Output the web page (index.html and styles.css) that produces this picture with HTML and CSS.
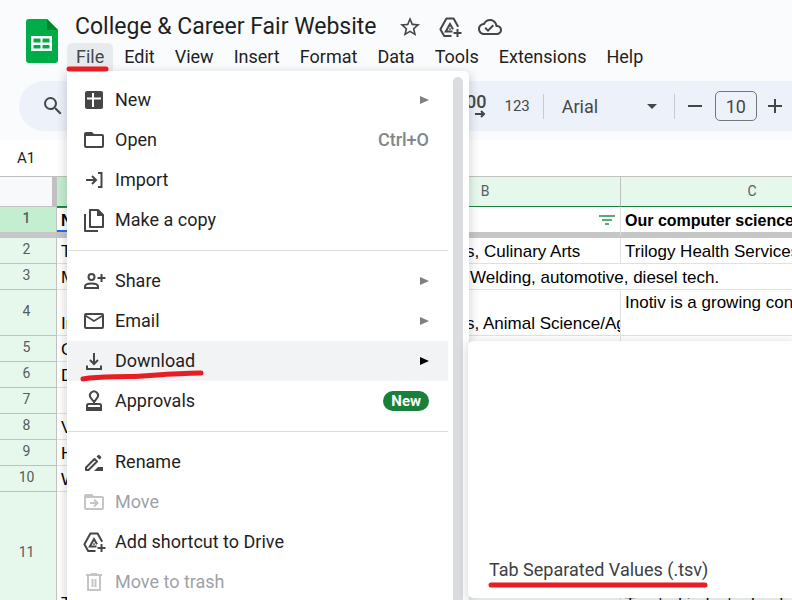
FILE: index.html
```html
<!DOCTYPE html>
<html lang="en">
<head>
<meta charset="utf-8">
<title>College &amp; Career Fair Website</title>
<link rel="stylesheet" href="styles.css">
</head>
<body>
<svg class="defs" aria-hidden="true">
  <symbol id="drive-add" viewBox="0 0 24 24">
    <path d="M13.500 21H6.200L2.400 14.200 8.400 3.400h7.200l4.600 8.300" fill="none" stroke="currentColor" stroke-width="2" stroke-linejoin="round"/>
    <path d="M14.500 16.500H7.800L12 9l3 5.200" fill="none" stroke="currentColor" stroke-width="2"/>
    <path d="M12 12.600l1.200 2.200h-2.400z" fill="currentColor"/>
    <path d="M19.500 14v8M15.500 18h8" fill="none" stroke="currentColor" stroke-width="2"/>
  </symbol>
</svg>
<header class="header">
  <svg class="logo" viewBox="0 0 32 44" role="img" aria-label="Sheets">
    <path d="M3 0h18l11 11v30a3 3 0 0 1-3 3H3a3 3 0 0 1-3-3V3a3 3 0 0 1 3-3z" fill="#00ac47"/>
    <path d="M21 0l11 11H21z" fill="#00832d"/>
    <path d="M5 17h21v15H5zM7.500 19.500v4h7v-4zM16.500 19.500v4h7v-4zM7.500 26v3.500h7V26zM16.500 26v3.500h7V26z" fill="#fff" fill-rule="evenodd"/>
  </svg>
  <div class="heading">
    <div class="title-row">
      <h1 class="title">College &amp; Career Fair Website</h1>
      <button class="icon-button" aria-label="Star"><svg viewBox="0 0 24 24"><path d="M22 9.240l-7.190-.62L12 2 9.190 8.630 2 9.240l5.460 4.730L5.820 21 12 17.270 18.180 21l-1.630-7.030L22 9.240zM12 15.400l-3.760 2.270 1-4.280-3.320-2.880 4.380-.38L12 6.100l1.710 4.040 4.380.38-3.320 2.880 1 4.280L12 15.400z"/></svg></button>
      <button class="icon-button" aria-label="Add shortcut to Drive"><svg><use href="#drive-add"/></svg></button>
      <button class="icon-button" aria-label="Saved to Drive"><svg viewBox="0 0 24 24"><path d="M19.350 10.040C18.670 6.590 15.640 4 12 4 9.110 4 6.600 5.640 5.350 8.040 2.340 8.360 0 10.910 0 14c0 3.310 2.690 6 6 6h13c2.760 0 5-2.240 5-5 0-2.640-2.050-4.780-4.650-4.960zM19 18H6c-2.210 0-4-1.790-4-4 0-2.050 1.530-3.760 3.560-3.970l1.070-.11.5-.95C8.080 7.140 9.940 6 12 6c2.620 0 4.880 1.860 5.390 4.430l.3 1.500 1.530.11c1.560.1 2.780 1.410 2.780 2.960 0 1.650-1.350 3-3 3zm-9-3.820l-2.090-2.090L6.500 13.500 10 17l6.010-6.010-1.410-1.410z"/></svg></button>
    </div>
    <nav class="menubar">
      <button class="open">File</button><button>Edit</button><button>View</button><button>Insert</button><button>Format</button><button>Data</button><button>Tools</button><button>Extensions</button><button>Help</button>
    </nav>
  </div>
</header>
<div class="toolbar">
  <button class="tool search" aria-label="Search the menus"><svg viewBox="0 0 24 24"><path d="M15.500 14h-.79l-.28-.27A6.470 6.470 0 0 0 16 9.500 6.500 6.500 0 1 0 9.500 16c1.610 0 3.090-.59 4.230-1.570l.27.28v.79l5 4.990L20.490 19l-4.990-5zm-6 0C7.010 14 5 11.990 5 9.500S7.010 5 9.500 5 14 7.010 14 9.500 11.990 14 9.500 14z"/></svg></button>
  <button class="tool decimals" aria-label="Increase decimal places">.00<svg viewBox="0 0 12 8"><path d="M1 4h9M7 1l3 3-3 3" fill="none" stroke="currentColor" stroke-width="2"/></svg></button>
  <button class="tool formats">123</button>
  <span class="divider"></span>
  <button class="tool font">Arial<svg viewBox="0 0 10 5"><path d="M0 0h10L5 5z"/></svg></button>
  <span class="divider"></span>
  <button class="tool step" aria-label="Decrease font size"><svg viewBox="0 0 14 14"><path d="M0 6h14v2H0z"/></svg></button>
  <input class="size" aria-label="Font size" value="10">
  <button class="tool step" aria-label="Increase font size"><svg viewBox="0 0 14 14"><path d="M0 6h6V0h2v6h6v2H8v6H6V8H0z"/></svg></button>
</div>
<div class="namebox"><input aria-label="Name box" value="A1"></div>
<main class="sheet">
  <table>
    <colgroup><col class="c-head"><col class="c-a"><col class="c-b"><col class="c-c"></colgroup>
    <thead><tr><th class="corner"></th><th class="active">A</th><th>B</th><th>C</th></tr></thead>
    <tbody>
      <tr class="frozen"><th>1</th><td class="selected">Name</td><td class="filter"><svg viewBox="0 0 16 10" role="img" aria-label="Filter"><path d="M0 0h16v2H0zM3 4h10v2H3zM6 8h4v2H6z"/></svg></td><td>Our computer science</td></tr>
      <tr class="after"><th>2</th><td>Trilogy</td><td class="tail">s, Culinary Arts</td><td>Trilogy Health Services</td></tr>
      <tr><th>3</th><td>M</td><td class="tail spill" colspan="2">Welding, automotive, diesel tech.</td></tr>
      <tr class="tall"><th>4</th><td>Inotiv</td><td class="tail">s, Animal Science/Ag</td><td class="top">Inotiv is a growing contract</td></tr>
      <tr><th>5</th><td>C</td><td></td><td></td></tr>
      <tr><th>6</th><td>D</td><td></td><td></td></tr>
      <tr><th>7</th><td></td><td></td><td></td></tr>
      <tr><th>8</th><td>V</td><td></td><td></td></tr>
      <tr><th>9</th><td>H</td><td></td><td></td></tr>
      <tr><th>10</th><td>W</td><td></td><td></td></tr>
      <tr class="last"><th>11</th><td>T</td><td></td><td>Trusted industry leader for</td></tr>
    </tbody>
  </table>
</main>
<div class="file-menu" role="menu">
  <div class="items">
    <button role="menuitem"><svg viewBox="0 0 24 24"><path d="M5 3h14a2 2 0 0 1 2 2v14a2 2 0 0 1-2 2H5a2 2 0 0 1-2-2V5a2 2 0 0 1 2-2zM5 9.500v2h5V19h2v-7.500h7v-2h-7V5h-2v4.500z" fill-rule="evenodd"/></svg><span>New</span><i class="arrow"></i></button>
    <button role="menuitem"><svg viewBox="0 0 24 24"><path d="M20 6h-8l-2-2H4a2 2 0 0 0-2 2v12a2 2 0 0 0 2 2h16a2 2 0 0 0 2-2V8a2 2 0 0 0-2-2zm0 12H4V8h16z"/></svg><span>Open</span><kbd>Ctrl+O</kbd></button>
    <button role="menuitem"><svg viewBox="0 0 24 24"><path d="M4 12h10M10 8l4 4-4 4M16 5h3.500v14H16" fill="none" stroke="currentColor" stroke-width="2"/></svg><span>Import</span></button>
    <button role="menuitem"><svg class="copy" viewBox="0 0 24 28"><path d="M8 4h8l5 5v12H8zM3 8v17h13" fill="none" stroke="currentColor" stroke-width="2" stroke-linejoin="round"/><path d="M15 3v7h7z"/></svg><span>Make a copy</span></button>
    <hr>
    <button role="menuitem"><svg viewBox="0 0 24 24"><circle cx="9.500" cy="8" r="3" fill="none" stroke="currentColor" stroke-width="2"/><path d="M3 19v-1.500c0-2 3.500-3 6.500-3s6.500 1 6.500 3V19zM19.500 5v8M15.500 9h8" fill="none" stroke="currentColor" stroke-width="2"/></svg><span>Share</span><i class="arrow"></i></button>
    <button role="menuitem"><svg viewBox="0 0 24 24"><path d="M20 4H4a2 2 0 0 0-2 2v12a2 2 0 0 0 2 2h16a2 2 0 0 0 2-2V6a2 2 0 0 0-2-2zm0 14H4V8l8 5 8-5zm-8-7L4 6h16z"/></svg><span>Email</span><i class="arrow"></i></button>
    <button role="menuitem" class="current"><svg viewBox="0 0 24 24"><path d="M12 4v11M8 11l4 4 4-4M5 16.500V20h14v-3.500" fill="none" stroke="currentColor" stroke-width="2"/></svg><span>Download</span><i class="arrow"></i></button>
    <button role="menuitem"><svg viewBox="0 0 24 24"><path d="M12 13l-3.200-4.200a4 4 0 1 1 6.400 0zM5 19v-2.500A1.500 1.500 0 0 1 6.500 15h11a1.500 1.500 0 0 1 1.500 1.500V19" fill="none" stroke="currentColor" stroke-width="2"/><path d="M4 18h16v4H4zM11 11h2v4h-2z"/></svg><span>Approvals</span><b class="badge">New</b></button>
    <hr>
    <button role="menuitem"><svg viewBox="0 0 24 24"><path d="M4 20v-2.500L12.500 9 15 11.500 6.500 20z" fill="none" stroke="currentColor" stroke-width="2" stroke-linejoin="round"/><path d="M14.500 6.500l1.300-1.300a1.200 1.200 0 0 1 1.700 0l1.400 1.400a1.200 1.200 0 0 1 0 1.700L17.500 9.600zM16 17h5v4h-9z"/></svg><span>Rename</span></button>
    <button role="menuitem" disabled><svg viewBox="0 0 24 24"><path d="M20 6h-8l-2-2H4a2 2 0 0 0-2 2v12a2 2 0 0 0 2 2h16a2 2 0 0 0 2-2V8a2 2 0 0 0-2-2zm0 12H4V8h16z"/><path d="M8 13h7M12 9.500l3.500 3.500-3.500 3.500" fill="none" stroke="currentColor" stroke-width="2"/></svg><span>Move</span></button>
    <button role="menuitem"><svg><use href="#drive-add"/></svg><span>Add shortcut to Drive</span></button>
    <button role="menuitem" disabled><svg viewBox="0 0 24 24"><path d="M6 6v14h12V6M4 5h16M9 4h6M10.500 9v8M13.500 9v8" fill="none" stroke="currentColor" stroke-width="2"/></svg><span>Move to trash</span></button>
  </div>
  <div class="scrollbar"></div>
</div>
<div class="submenu" role="menu"><button role="menuitem">Tab Separated Values (.tsv)</button></div>
<svg class="mark mark-file" viewBox="0 0 44 8"><path d="M3 4h37"/></svg>
<svg class="mark mark-download" viewBox="0 0 126 14"><path d="M4 10C20 7 30 8 50 7.500S88 4.500 122 4"/></svg>
<svg class="mark mark-tsv" viewBox="0 0 224 8"><path d="M4 4h214"/></svg>
</body>
</html>
```
FILE: styles.css
```css
* { box-sizing: border-box; }
html, body { height: 100%; }
body {
  margin: 0;
  position: relative;
  overflow: hidden;
  background: #f9fbfd;
  color: #1f1f1f;
  font-family: Roboto, "Liberation Sans", sans-serif;
}
button, input { font: inherit; color: inherit; background: none; border: 0; padding: 0; margin: 0; }
svg { display: block; fill: currentColor; }
.defs { position: absolute; width: 0; height: 0; }

.header { display: flex; height: 71px; padding-left: 26px; }
.logo { width: 32px; height: 44px; margin-top: 19px; flex: none; }
.heading { margin-left: 9px; padding-top: 11px; }
.title-row { display: flex; align-items: center; height: 32px; padding-left: 8px; }
.title { margin: 0 21px 0 0; font-size: 23px; font-weight: 400; line-height: 32px; white-space: nowrap; }
.icon-button { color: #444746; margin-right: 16px; }
.icon-button svg { width: 24px; height: 24px; }
.menubar { display: flex; gap: 2px; }
.menubar button { height: 28px; padding: 0 9px; font-size: 18px; line-height: 28px; }
.menubar .open { background: #e8ebee; border-radius: 5px 5px 0 0; color: #444746; }

.toolbar {
  display: flex;
  align-items: center;
  height: 50px;
  margin: 10px 0 9px 19px;
  background: #edf2fa;
  border-radius: 25px 0 0 25px;
  color: #444746;
  white-space: nowrap;
  font-size: 18px;
}
.search { margin-left: 22px; }
.search svg { width: 24px; height: 24px; }
.decimals { margin-left: 396px; font-weight: 500; line-height: 16px; }
.decimals svg { width: 12px; height: 8px; margin-left: auto; }
.formats { margin-left: 18px; font-size: 15px; }
.divider { width: 1px; height: 25px; margin: 0 18px 0 13px; background: #c7cacf; }
.font { display: flex; align-items: center; justify-content: space-between; width: 95px; }
.font svg { width: 10px; height: 5px; }
.font + .divider { margin: 0 13px 0 17px; }
.step svg { width: 14px; height: 14px; }
.size {
  width: 42px;
  height: 30px;
  margin: 0 11px 0 13px;
  border: 1px solid #747775;
  border-radius: 5px;
  text-align: center;
}

.namebox { height: 37px; background: #fff; border-bottom: 1px solid #c0c0c0; }
.namebox input { width: 48px; height: 36px; padding-left: 17px; font-size: 15px; }

.sheet { overflow: hidden; background: #fff; }
table { width: 884px; table-layout: fixed; border-collapse: separate; border-spacing: 0; }
.c-head { width: 57px; }
.c-a { width: 293px; }
.c-b { width: 271px; }
th, td { height: 26px; padding: 0; border: solid #e1e1e1; border-width: 0 1px 1px 0; overflow: hidden; white-space: nowrap; }
th { background: #e6f8ec; border-color: #c0c0c0; color: #575b5f; font-size: 14px; font-weight: 400; line-height: 18px; }
tbody th { padding: 0 3px 3px 0; }
td { padding: 0 4px; color: #000; font: 17px/22px "Liberation Sans", Arial, sans-serif; vertical-align: bottom; }
thead th { height: 30px; padding-bottom: 2px; border-bottom-color: #188038; }
.corner { background: #f8f9fa; border-right: 5px solid #c0c0c0; border-bottom-color: #c0c0c0; }
thead .active, .frozen th { background: #c4eed0; }
.frozen th { font-weight: 500; }
.frozen th, .frozen td { height: 31px; border-bottom: 6px solid #c6c6c6; }
.frozen td { font-weight: 700; font-size: 16px; }
.frozen .selected { box-shadow: inset 0 -2px #1a73e8, inset 0 1px #1a73e8; }
.filter svg { width: 16px; height: 10px; margin: 0 5px 7px auto; color: #5bab76; }
.filter { padding: 0; }
.tail { padding: 0 0 0 116px; }
.spill { padding-left: 120px; }
.tall th, .tall td { height: 46px; }
.top { vertical-align: top; padding-top: 2px; }
.last th, .last td { height: 124px; }

.file-menu {
  position: absolute;
  top: 71px;
  bottom: 0;
  left: 67px;
  width: 402px;
  display: flex;
  overflow: hidden;
  padding-left: 1px;
  background: #fff;
  border-radius: 0 5px 0 0;
  box-shadow: 0 3px 8px 2px rgba(60, 64, 67, .2);
}
.items { flex: 1; padding-top: 9px; }
.items button {
  display: flex;
  align-items: center;
  width: 100%;
  height: 40px;
  padding: 0 19px 0 14px;
  color: #1f1f1f;
  font-size: 18px;
  text-align: left;
}
.items svg { width: 24px; height: 24px; margin-right: 9px; color: #444746; overflow: visible; }
.items .copy { height: 28px; }
.items span { flex: 1; padding-bottom: 2px; }
.items kbd { padding-bottom: 2px; font: 500 18px Roboto, sans-serif; color: #80868b; }
.items .current { background: #f1f3f4; }
.items button:disabled { color: #9fa2a6; }
.items button:disabled svg { color: #c4c5c5; }
.items hr { height: 1px; margin: 10px 0; border: 0; background: #dadce0; }
.arrow { border: solid transparent; border-width: 4px 0 4px 9px; border-left-color: #808080; }
.current .arrow { border-left-color: #000; }
.badge { padding: 0 8px; border-radius: 10px; background: #188038; color: #fff; font-size: 15px; font-weight: 700; line-height: 20px; }
.scrollbar { width: 10px; margin: 6px 6px 0 5px; border-radius: 5px 5px 0 0; background: #dadce0; }

.submenu {
  position: absolute;
  top: 341px;
  left: 468px;
  right: 0;
  height: 257px;
  display: flex;
  align-items: flex-end;
  padding: 9px 21px;
  background: #fff;
  border-radius: 5px 0 0 5px;
  box-shadow: 0 2px 8px 2px rgba(60, 64, 67, .18);
}
.submenu button { height: 40px; font-size: 18px; color: #3c4043; white-space: nowrap; }

.mark { position: absolute; fill: none; stroke: #e81c23; stroke-width: 5; stroke-linecap: round; }
.mark-file { left: 66px; top: 65px; width: 44px; height: 8px; }
.mark-download { left: 79px; top: 369px; width: 126px; height: 14px; }
.mark-tsv { left: 487px; top: 581px; width: 224px; height: 8px; }
```
